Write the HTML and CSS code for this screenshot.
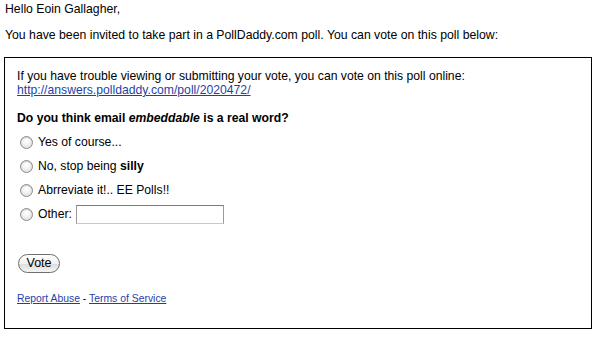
FILE: index.html
```html
<!DOCTYPE html>
<html>
<head>
<meta charset="utf-8">
<link rel="stylesheet" href="styles.css">
</head>
<body>
<p class="greet">Hello Eoin Gallagher,</p>
<p class="intro">You have been invited to take part in a PollDaddy.com poll. You can vote on this poll below:</p>
<div class="poll">
  <p class="trouble">If you have trouble viewing or submitting your vote, you can vote on this poll online:<br><a href="#">http://answers.polldaddy.com/poll/2020472/</a></p>
  <p class="question">Do you think email <em>embeddable</em> is a real word?</p>
  <ul class="answers">
    <li><span class="radio"></span><span>Yes of course...</span></li>
    <li><span class="radio"></span><span>No, stop being <b>silly</b></span></li>
    <li><span class="radio"></span><span>Abrreviate it!.. EE Polls!!</span></li>
    <li><span class="radio"></span><span>Other:</span><span class="other"></span></li>
  </ul>
  <span class="vote">Vote</span>
  <p class="footer"><a href="#">Report Abuse</a> - <a href="#">Terms of Service</a></p>
</div>
</body>
</html>
```
FILE: styles.css
```css
html, body { margin: 0; padding: 0; background: #fff; }
body {
  font-family: "Liberation Sans", Arial, Helvetica, sans-serif;
  font-size: 12.25px;
  color: #000;
  padding: 2px 7px 0 4px;
}
p { margin: 0; }
.greet { padding-left: 1px; line-height: 15px; }
.intro { padding-left: 1px; line-height: 15px; margin-top: 11px; }
.poll {
  margin-top: 14px;
  border: 1px solid #000;
  padding: 11px 12px 0 12px;
  height: 272px;
  box-sizing: border-box;
  width: 588px;
}
.trouble { font-size: 12.2px; line-height: 14px; }
a { color: #1f3fa8; text-decoration: underline; }
.question { font-weight: bold; font-size: 12.2px; margin-top: 14px; line-height: 14px; }
.answers { list-style: none; margin: 5px 0 0 0; padding: 0; font-size: 12.2px; }
.answers li { display: flex; align-items: center; height: 24px; }
.radio {
  width: 13px; height: 13px; border-radius: 50%;
  border: 1px solid #8a8a8a;
  background: radial-gradient(circle at 50% 35%, #ffffff 0%, #f2f2f2 45%, #d8d8d8 100%);
  box-sizing: border-box;
  margin: 0 5px 0 3px;
  box-shadow: inset 0 1px 1px rgba(0,0,0,0.15);
}
.other {
  display: inline-block;
  width: 148px; height: 19px;
  border: 1px solid #9a9a9a;
  border-top-color: #7a7a7a;
  border-bottom-color: #c8c8c8;
  box-sizing: border-box;
  margin-left: 4px;
}
.vote {
  display: inline-block;
  margin-top: 28px;
  margin-left: 1px;
  height: 19px;
  width: 42px;
  box-sizing: border-box;
  border: 1px solid #6e6e6e;
  border-radius: 10px;
  background: linear-gradient(#ffffff, #f1f1f1 50%, #dcdcdc 51%, #f4f4f4);
  font-size: 12.5px;
  line-height: 17px;
  text-align: center;
}
.footer { font-size: 10.4px; margin-top: 20px; line-height: 12px; }
```
